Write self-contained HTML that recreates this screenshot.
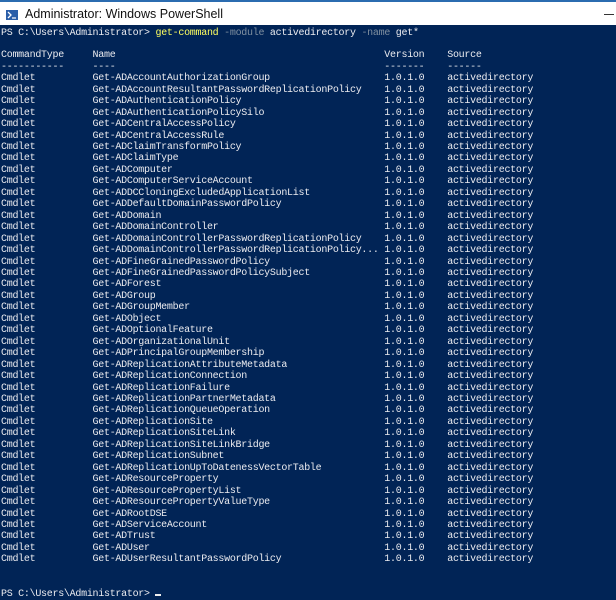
<!DOCTYPE html>
<html><head><style>
html,body{margin:0;padding:0;width:616px;height:600px;overflow:hidden;background:#012456}
#tb{position:absolute;left:0;top:0;width:616px;height:25px;background:#fff;border-top:2px solid #2b6cb0;box-sizing:border-box}
#tt{position:absolute;left:25px;top:5px;font:12.5px "Liberation Sans",sans-serif;color:#111}
#ic{position:absolute;left:6px;top:8px;width:12px;height:10px;background:#2a5ea8}
#mn{position:absolute;left:604px;top:12px;width:10px;height:1px;background:#333}
pre{position:absolute;left:1px;top:27.5px;margin:0;font:10px/11.45px "Liberation Mono",monospace;letter-spacing:-0.28px;color:#ececf0;white-space:pre}
.y{color:#ffff60}.g{color:#8090a0}
#cur{display:inline-block;width:5.5px;height:2px;background:#eee;vertical-align:baseline}
</style></head><body>
<div id="tb"><div id="ic"><svg width="12" height="10" style="position:absolute;left:0;top:0"><path d="M2 2 L5 5 L2 8" stroke="#fff" stroke-width="1.3" fill="none"/><path d="M6 8 H10" stroke="#fff" stroke-width="1.2"/></svg></div><div id="tt">Administrator: Windows PowerShell</div><div id="mn"></div></div>
<pre>PS C:\Users\Administrator&gt; <span class="y">get-command</span> <span class="g">-module</span> activedirectory <span class="g">-name</span> get*

CommandType     Name                                               Version    Source
-----------     ----                                               -------    ------
Cmdlet          Get-ADAccountAuthorizationGroup                    1.0.1.0    activedirectory
Cmdlet          Get-ADAccountResultantPasswordReplicationPolicy    1.0.1.0    activedirectory
Cmdlet          Get-ADAuthenticationPolicy                         1.0.1.0    activedirectory
Cmdlet          Get-ADAuthenticationPolicySilo                     1.0.1.0    activedirectory
Cmdlet          Get-ADCentralAccessPolicy                          1.0.1.0    activedirectory
Cmdlet          Get-ADCentralAccessRule                            1.0.1.0    activedirectory
Cmdlet          Get-ADClaimTransformPolicy                         1.0.1.0    activedirectory
Cmdlet          Get-ADClaimType                                    1.0.1.0    activedirectory
Cmdlet          Get-ADComputer                                     1.0.1.0    activedirectory
Cmdlet          Get-ADComputerServiceAccount                       1.0.1.0    activedirectory
Cmdlet          Get-ADDCCloningExcludedApplicationList             1.0.1.0    activedirectory
Cmdlet          Get-ADDefaultDomainPasswordPolicy                  1.0.1.0    activedirectory
Cmdlet          Get-ADDomain                                       1.0.1.0    activedirectory
Cmdlet          Get-ADDomainController                             1.0.1.0    activedirectory
Cmdlet          Get-ADDomainControllerPasswordReplicationPolicy    1.0.1.0    activedirectory
Cmdlet          Get-ADDomainControllerPasswordReplicationPolicy... 1.0.1.0    activedirectory
Cmdlet          Get-ADFineGrainedPasswordPolicy                    1.0.1.0    activedirectory
Cmdlet          Get-ADFineGrainedPasswordPolicySubject             1.0.1.0    activedirectory
Cmdlet          Get-ADForest                                       1.0.1.0    activedirectory
Cmdlet          Get-ADGroup                                        1.0.1.0    activedirectory
Cmdlet          Get-ADGroupMember                                  1.0.1.0    activedirectory
Cmdlet          Get-ADObject                                       1.0.1.0    activedirectory
Cmdlet          Get-ADOptionalFeature                              1.0.1.0    activedirectory
Cmdlet          Get-ADOrganizationalUnit                           1.0.1.0    activedirectory
Cmdlet          Get-ADPrincipalGroupMembership                     1.0.1.0    activedirectory
Cmdlet          Get-ADReplicationAttributeMetadata                 1.0.1.0    activedirectory
Cmdlet          Get-ADReplicationConnection                        1.0.1.0    activedirectory
Cmdlet          Get-ADReplicationFailure                           1.0.1.0    activedirectory
Cmdlet          Get-ADReplicationPartnerMetadata                   1.0.1.0    activedirectory
Cmdlet          Get-ADReplicationQueueOperation                    1.0.1.0    activedirectory
Cmdlet          Get-ADReplicationSite                              1.0.1.0    activedirectory
Cmdlet          Get-ADReplicationSiteLink                          1.0.1.0    activedirectory
Cmdlet          Get-ADReplicationSiteLinkBridge                    1.0.1.0    activedirectory
Cmdlet          Get-ADReplicationSubnet                            1.0.1.0    activedirectory
Cmdlet          Get-ADReplicationUpToDatenessVectorTable           1.0.1.0    activedirectory
Cmdlet          Get-ADResourceProperty                             1.0.1.0    activedirectory
Cmdlet          Get-ADResourcePropertyList                         1.0.1.0    activedirectory
Cmdlet          Get-ADResourcePropertyValueType                    1.0.1.0    activedirectory
Cmdlet          Get-ADRootDSE                                      1.0.1.0    activedirectory
Cmdlet          Get-ADServiceAccount                               1.0.1.0    activedirectory
Cmdlet          Get-ADTrust                                        1.0.1.0    activedirectory
Cmdlet          Get-ADUser                                         1.0.1.0    activedirectory
Cmdlet          Get-ADUserResultantPasswordPolicy                  1.0.1.0    activedirectory


PS C:\Users\Administrator&gt; <span id="cur"></span></pre>
</body></html>
